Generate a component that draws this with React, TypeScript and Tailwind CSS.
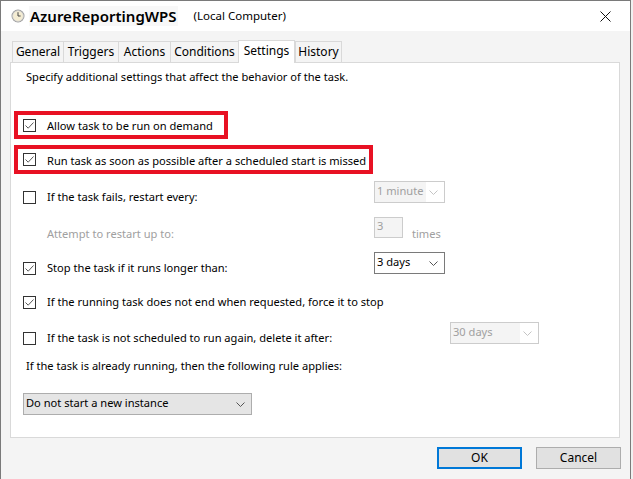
import * as React from "react";

const Check = ({ checked }: { checked?: boolean }) => (
  <div className="w-[13px] h-[13px] border border-[#333333] bg-white shrink-0 flex items-center justify-center">
    {checked && (
      <svg width="11" height="11" viewBox="0 0 11 11">
        <polyline points="1.5,5.5 4.2,8.2 9.5,2.5" fill="none" stroke="#444444" strokeWidth="0.9" />
      </svg>
    )}
  </div>
);

const Chevron = ({ color }: { color: string }) => (
  <svg width="9" height="5" viewBox="0 0 9 5" className="shrink-0">
    <polyline points="0.5,0.5 4.5,4.5 8.5,0.5" fill="none" stroke={color} strokeWidth="1" />
  </svg>
);

const Select = ({
  text,
  width,
  disabled,
  gray,
}: {
  text: string;
  width: string;
  disabled?: boolean;
  gray?: boolean;
}) => (
  <div
    className={
      width +
      " h-[22px] flex items-center border shrink-0 " +
      (disabled
        ? "border-[#cccccc] bg-white text-[#a0a0a0]"
        : gray
        ? "border-[#adadad] bg-[#e5e5e5] text-black"
        : "border-[#7a7a7a] bg-white text-black")
    }
  >
    <div className={"flex-1 h-full pl-[2px] leading-[18px] " + (disabled ? "bg-[#f4f4f4] mr-[18px]" : "")}>
      {text}
    </div>
    {!disabled && <div className="w-[4px]" />}
    <div className={disabled ? "-ml-[15px] mr-[6px]" : "mr-[6px]"}>
      <Chevron color={disabled ? "#c4c4c4" : "#555555"} />
    </div>
  </div>
);

const tabs = [
  { label: "General", w: "w-[51px]" },
  { label: "Triggers", w: "w-[55px]" },
  { label: "Actions", w: "w-[52px]" },
  { label: "Conditions", w: "w-[68px]" },
  { label: "Settings", w: "w-[57px]", active: true },
  { label: "History", w: "w-[47px]" },
];

export default function App() {
  return (
    <div className="w-[633px] h-[479px] bg-[#f0f0f0] font-['Segoe_UI','Noto_Sans',sans-serif] text-[11.1px] text-black overflow-hidden whitespace-nowrap">
      <div className="w-[631px] h-[479px] bg-[#f4f4f4] border-l border-r border-t border-[#7a7a7a]">
        {/* title bar */}
        <div className="h-[30px] bg-white flex items-center pl-[10px]">
          <svg width="14" height="14" viewBox="0 0 14 14" className="shrink-0">
            <circle cx="7" cy="7" r="6.5" fill="#9a9a9a" />
            <circle cx="7" cy="7" r="5.3" fill="#f4ecd2" stroke="#d8d8d8" strokeWidth="0.8" />
            <line x1="7" y1="7" x2="7" y2="3.2" stroke="#444" strokeWidth="1" />
            <line x1="7" y1="7" x2="9.6" y2="7" stroke="#444" strokeWidth="1" />
          </svg>
          <div className="ml-[4px] px-[1px] bg-[#f8f8f8] text-[15px] font-semibold leading-[20px]">
            AzureReportingWPS
          </div>
          <div className="ml-[16px] text-[11.5px] leading-[20px]">(Local Computer)</div>
          <div className="ml-auto mr-[19px]">
            <svg width="11" height="11" viewBox="0 0 11 11">
              <line x1="0.5" y1="0.5" x2="10.5" y2="10.5" stroke="#111" strokeWidth="1" />
              <line x1="10.5" y1="0.5" x2="0.5" y2="10.5" stroke="#111" strokeWidth="1" />
            </svg>
          </div>
        </div>

        {/* tabs */}
        <div className="mt-[9px] h-[22px] flex items-end pl-[11px]">
          {tabs.map((t, i) => (
            <div
              key={t.label}
              className={
                t.w +
                " flex justify-center border-t border-l border-[#d9d9d9] text-[12px] " +
                (i === tabs.length - 1 ? "border-r " : "") +
                (t.active
                  ? "h-[23px] -mb-[1px] bg-white border-r relative z-10 pt-[2px] leading-[16px]"
                  : "h-[21px] bg-[#f4f4f4] pt-[2px] leading-[16px]")
              }
            >
              {t.label}
            </div>
          ))}
        </div>

        {/* panel */}
        <div className="ml-[9px] w-[610px] h-[376px] border border-[#d9d9d9] bg-white">
          <div className="pt-[6px] pl-[15px] h-[22px] leading-[16px]">
            Specify additional settings that affect the behavior of the task.
          </div>

          <div className="mt-[26px] ml-[3px] w-[214px] h-[28px] border-[4px] border-[#e81123] flex items-center pl-[5px]">
            <Check checked />
            <span className="ml-[11px] leading-[16px] mt-[2px]">Allow task to be run on demand</span>
          </div>

          <div className="mt-[6px] ml-[3px] w-[359px] h-[29px] border-[4px] border-[#e81123] flex items-center pl-[5px]">
            <Check checked />
            <span className="ml-[11px] leading-[16px] mt-[2px]">Run task as soon as possible after a scheduled start is missed</span>
          </div>

          <div className="mt-[7px] pl-[12px] h-[22px] flex items-start">
            <div className="w-[351px] mt-[8px] h-[16px] flex items-center">
              <Check />
              <span className="ml-[11px] leading-[16px]">If the task fails, restart every:</span>
            </div>
            <Select text="1 minute" width="w-[71px]" disabled />
          </div>

          <div className="mt-[14px] pl-[12px] h-[21px] flex items-start">
            <div className="w-[351px] mt-[9px] pl-[24px] leading-[16px] text-[#a0a0a0]">
              Attempt to restart up to:
            </div>
            <div className="w-[29px] h-[21px] border border-[#cccccc] bg-[#f4f4f4] text-[#a0a0a0] pl-[2px] leading-[16px]">
              3
            </div>
            <div className="ml-[9px] mt-[9px] leading-[16px] text-[#a0a0a0]">times</div>
          </div>

          <div className="mt-[14px] pl-[12px] h-[22px] flex items-start">
            <div className="w-[351px] mt-[8px] h-[16px] flex items-center">
              <Check checked />
              <span className="ml-[11px] leading-[16px]">Stop the task if it runs longer than:</span>
            </div>
            <Select text="3 days" width="w-[71px]" />
          </div>

          <div className="mt-[20px] pl-[12px] h-[16px] flex items-center">
            <Check checked />
            <span className="ml-[11px] leading-[16px]">
              If the running task does not end when requested, force it to stop
            </span>
          </div>

          <div className="mt-[12px] pl-[12px] h-[22px] flex items-start">
            <div className="w-[427px] mt-[8px] h-[16px] flex items-center">
              <Check />
              <span className="ml-[11px] leading-[16px]">
                If the task is not scheduled to run again, delete it after:
              </span>
            </div>
            <Select text="30 days" width="w-[89px]" disabled />
          </div>

          <div className="mt-[14px] pl-[15px] h-[16px] leading-[16px]">
            If the task is already running, then the following rule applies:
          </div>

          <div className="mt-[19px] pl-[12px]">
            <Select text="Do not start a new instance" width="w-[229px]" gray />
          </div>
        </div>

        {/* buttons */}
        <div className="mt-[9px] flex justify-end pr-[9px] gap-[14px]">
          <div className="w-[85px] h-[22px] border-2 border-[#0078d7] bg-[#e1e1e1] flex items-center justify-center leading-[16px] text-[12px]">
            OK
          </div>
          <div className="w-[85px] h-[22px] border border-[#adadad] bg-[#e1e1e1] flex items-center justify-center leading-[16px] text-[12px]">
            Cancel
          </div>
        </div>
      </div>
    </div>
  );
}
